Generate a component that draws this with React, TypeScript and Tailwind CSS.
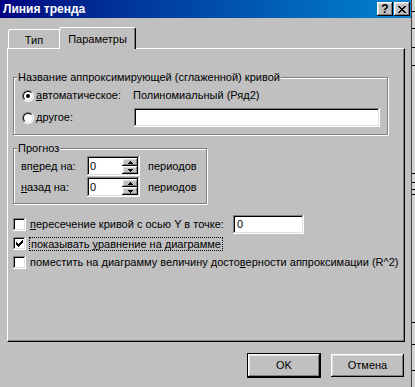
import type { ReactNode } from 'react'

const raised =
  'shadow-[inset_-1px_-1px_#000,inset_1px_1px_#fff,inset_-2px_-2px_#808080,inset_2px_2px_#dfdfdf]'
const sunken =
  'shadow-[inset_-1px_-1px_#fff,inset_1px_1px_#808080,inset_-2px_-2px_#dfdfdf,inset_2px_2px_#000]'

function Radio({ checked }: { checked?: boolean }) {
  return (
    <div className="w-[12px] h-[12px] rounded-full border border-t-[#808080] border-l-[#808080] border-b-white border-r-white shrink-0">
      <div className="w-full h-full rounded-full border border-t-black border-l-black border-b-[#dfdfdf] border-r-[#dfdfdf] bg-white flex items-center justify-center">
        {checked && <div className="w-[4px] h-[4px] rounded-full bg-black" />}
      </div>
    </div>
  )
}

function Check({ checked }: { checked?: boolean }) {
  return (
    <div className={`w-[13px] h-[13px] bg-white shrink-0 flex items-center justify-center ${sunken}`}>
      {checked && (
        <svg width="9" height="9" viewBox="0 0 9 9" shapeRendering="crispEdges">
          <path d="M1 3h1v1h1v1h1V4h1V3h1V2h1V1h1v3H7v1H6v1H5v1H4v1H3V7H2V6H1z" fill="#000" />
        </svg>
      )}
    </div>
  )
}

function Group({ title, className, children }: { title: string; className: string; children: ReactNode }) {
  return (
    <div className={`relative border border-[#808080] shadow-[inset_1px_1px_#fff,1px_1px_#fff] ${className}`}>
      <span className="absolute -top-[7px] left-[3px] bg-[#c0c0c0] pl-[1px] pr-[1px] leading-[13px]">{title}</span>
      {children}
    </div>
  )
}

function Spin() {
  return (
    <div className={`w-[53px] h-[20px] bg-white flex ${sunken} p-[2px]`}>
      <div className="flex-1 pl-[1px] leading-[16px]">0</div>
      <div className="w-[16px] flex flex-col">
        <div className={`flex-1 bg-[#c0c0c0] flex items-center justify-center ${raised}`}>
          <svg width="5" height="3" viewBox="0 0 5 3" shapeRendering="crispEdges">
            <path d="M2 0h1v1h1v1h1v1H0V2h1V1h1z" fill="#000" />
          </svg>
        </div>
        <div className={`flex-1 bg-[#c0c0c0] flex items-center justify-center ${raised}`}>
          <svg width="5" height="3" viewBox="0 0 5 3" shapeRendering="crispEdges">
            <path d="M0 0h5v1H4v1H3v1H2V2H1V1H0z" fill="#000" />
          </svg>
        </div>
      </div>
    </div>
  )
}

const ticks = [12, 17, 19, 18, 108, 9, 7, 5, 128, 22, 26, 19]

export default function App() {
  return (
    <div className="w-[415px] h-[387px] flex bg-[#c0c0c0] font-['Liberation_Sans',Arial,sans-serif] text-[11px] text-black overflow-hidden">
      <div className="w-[412px] flex flex-col border-r border-[#404040]">
        {/* title bar */}
        <div className="h-[18px] flex items-center bg-gradient-to-r from-[#000080] to-[#1084d0] pl-[3px] pr-[1px]">
          <span className="flex-1 text-white font-bold text-[12px]">Линия тренда</span>
          <div className={`w-[16px] h-[14px] bg-[#c0c0c0] ${raised} flex items-center justify-center font-bold text-[12px] leading-none`}>
            ?
          </div>
          <div className={`w-[16px] h-[14px] ml-[1px] bg-[#c0c0c0] ${raised} flex items-center justify-center`}>
            <svg width="8" height="7" viewBox="0 0 8 7" shapeRendering="crispEdges">
              <path
                d="M0 0h2v1h1v1h2V1h1V0h2v1H7v1H6v1H5v1h1v1h1v1h1v1H6V6H5V5H3v1H2v1H0V6h1V5h1V4h1V3H2V2H1V1H0z"
                fill="#000"
              />
            </svg>
          </div>
        </div>

        {/* tabs */}
        <div className="mt-[9px] ml-[8px] flex items-end h-[21px]">
          <div className="w-[51px] h-[19px] border-t border-l border-white rounded-tl-[3px] flex justify-center pt-[4px] leading-[13px]">
            Тип
          </div>
          <div className="relative z-10 w-[77px] h-[22px] -mb-[1px] bg-[#c0c0c0] border-t border-l border-white border-r border-r-black rounded-t-[3px] shadow-[inset_-1px_0_#808080] flex justify-center pt-[5px] leading-[13px]">
            Параметры
          </div>
        </div>

        {/* panel */}
        <div className="ml-[7px] w-[398px] h-[294px] border border-t-white border-l-white border-r-black border-b-black shadow-[inset_-1px_-1px_#808080] flex flex-col pl-[5px]">
          <Group title="Название аппроксимирующей (сглаженной) кривой" className="mt-[28px] w-[375px] h-[58px] pt-[11px] pl-[8px]">
            <div className="flex items-center h-[13px]">
              <Radio checked />
              <span className="ml-[2px] w-[97px]">
                <u>а</u>втоматическое:
              </span>
              <span>Полиномиальный (Ряд2)</span>
            </div>
            <div className="flex items-center h-[19px] mt-[6px]">
              <Radio />
              <span className="ml-[2px] w-[98px]">
                <u>д</u>ругое:
              </span>
              <div className={`w-[246px] h-[19px] bg-white ${sunken}`} />
            </div>
          </Group>

          <Group title="Прогноз" className="mt-[13px] w-[194px] h-[56px] pt-[7px] pl-[7px]">
            <div className="flex items-center">
              <span className="w-[66px]">
                вп<u>е</u>ред на:
              </span>
              <Spin />
              <span className="ml-[8px]">периодов</span>
            </div>
            <div className="flex items-center mt-[1px]">
              <span className="w-[66px]">
                <u>н</u>азад на:
              </span>
              <Spin />
              <span className="ml-[8px]">периодов</span>
            </div>
          </Group>

          <div className="mt-[11px] flex flex-col">
            <div className="flex items-center h-[19px]">
              <Check />
              <span className="ml-[4px] w-[203px]">
                <u>п</u>ересечение кривой с осью Y в точке:
              </span>
              <div className={`w-[71px] h-[19px] bg-white ${sunken} pl-[4px] leading-[19px]`}>0</div>
            </div>
            <div className="flex items-center h-[19px]">
              <Check checked />
              <span className="ml-[3px] border border-dotted border-black px-[1px] leading-[12px]">
                показывать <u>у</u>равнение на диаграмме
              </span>
            </div>
            <div className="flex items-center h-[19px]">
              <Check />
              <span className="ml-[4px]">
                поместить на диаграмму величину досто<u>в</u>ерности аппроксимации (R^2)
              </span>
            </div>
          </div>
        </div>

        {/* buttons */}
        <div className="mt-[11px] flex justify-end pr-[7px] items-center">
          <div className="w-[74px] h-[25px] border border-black">
            <div className={`w-full h-full ${raised} flex items-center justify-center`}>OK</div>
          </div>
          <div className={`ml-[10px] w-[73px] h-[23px] ${raised} flex items-center justify-center`}>Отмена</div>
        </div>
      </div>

      {/* sliver of the sheet behind */}
      <div className="flex-1 bg-[#d4d4d4] flex flex-col">
        {ticks.map((h, i) => (
          <div key={i} style={{ height: h }} className="border-b border-black shrink-0" />
        ))}
      </div>
    </div>
  )
}
